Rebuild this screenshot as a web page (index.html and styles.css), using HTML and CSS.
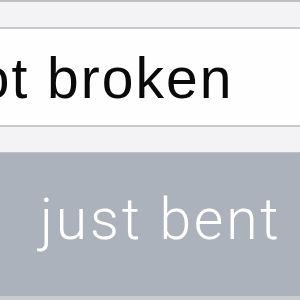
FILE: index.html
```html
<!DOCTYPE html>
<html>
<head>
<meta charset="utf-8">
<link rel="stylesheet" href="styles.css">
</head>
<body>
<div class="screen">
  <div class="rule rule-top"></div>
  <div class="band"></div>
  <div class="rule"></div>
  <div class="field"><span class="field-text">not broken</span></div>
  <div class="rule"></div>
  <div class="band"></div>
  <div class="rule rule-thin"></div>
  <div class="button"><span class="button-text">just bent</span></div>
  <div class="rule rule-bottom"></div>
</div>
</body>
</html>
```
FILE: styles.css
```css
html, body {
  margin: 0;
  padding: 0;
  background: #f3f3f5;
}
.screen {
  width: 300px;
  height: 300px;
  overflow: hidden;
  display: flex;
  flex-direction: column;
}
.rule {
  height: 2px;
  background: #c9c9cd;
  flex: none;
}
.rule-top {
  background: #bcbfc3;
}
.rule-thin {
  height: 1px;
  background: #bfc3c9;
}
.rule-bottom {
  height: 4px;
  background: #c7cbd0;
}
.band {
  height: 25px;
  background: #f3f3f5;
  flex: none;
}
.field {
  height: 96px;
  flex: none;
  background: #fefefe;
  box-sizing: border-box;
  padding-top: 21px;
  white-space: nowrap;
  overflow: hidden;
}
.field-text {
  display: block;
  margin-left: -56px;
  font-family: "Liberation Sans", Arial, sans-serif;
  font-size: 57px;
  line-height: 57px;
  letter-spacing: 2px;
  color: #0a0a0a;
}
.button {
  height: 143px;
  flex: none;
  background: #abb2bb;
  box-sizing: border-box;
  padding-top: 38px;
  padding-left: 40px;
  white-space: nowrap;
  overflow: hidden;
}
.button-text {
  display: block;
  font-family: Roboto, "Liberation Sans", sans-serif;
  font-weight: 300;
  font-size: 57px;
  line-height: 57px;
  letter-spacing: 2.8px;
  color: #ffffff;
}
```
